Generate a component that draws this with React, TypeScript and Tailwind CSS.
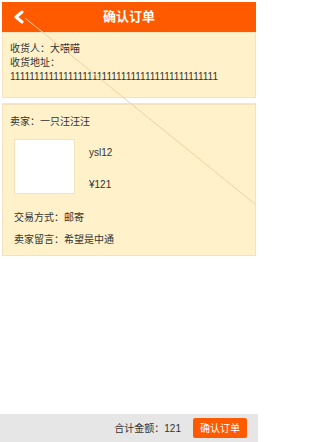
export default function App() {
    return (
        <div className="relative w-[258px] h-[442px] bg-white flex flex-col font-['Liberation_Sans','Noto_Sans_CJK_SC',sans-serif] text-[10px] text-[#333]">
            {/* header */}
            <div className="mt-[2px] mx-[2px] h-[30px] bg-[#ff5a00] flex items-center relative">
                <svg className="absolute left-[11px] top-[8px]" width="12" height="14" viewBox="0 0 12 14">
                    <path d="M9 2 L3 7 L9 12" fill="none" stroke="#fff" strokeWidth="3" strokeLinecap="round" strokeLinejoin="round" />
                </svg>
                <div className="flex-1 text-center text-white text-[13px] font-bold">确认订单</div>
            </div>

            {/* address */}
            <div className="mx-[2px] bg-[#fff1c9] border border-[#f3e2bb] px-[7px] pt-[9px] pb-[13px] leading-[14px]">
                <div>收货人：大喵喵</div>
                <div>收货地址：</div>
                <div>1111111111111111111111111111111111111111111</div>
            </div>

            <div className="mx-[2px] h-[6px] border-b border-[#e6e6e6]" />

            {/* order */}
            <div className="mx-[2px] bg-[#fff1c9] border border-[#f3e2bb] h-[152px] px-[7px] pt-[9px]">
                <div>卖家：一只汪汪汪</div>
                <div className="flex mt-[10px] ml-[4px]">
                    <div className="w-[61px] h-[55px] bg-white border border-[#f3e2bb]" />
                    <div className="flex flex-col justify-between ml-[14px] pt-[6px] pb-[2px]">
                        <div>ysl12</div>
                        <div>¥121</div>
                    </div>
                </div>
                <div className="ml-[4px] mt-[13px] leading-[22px]">
                    <div>交易方式：邮寄</div>
                    <div>卖家留言：希望是中通</div>
                </div>
            </div>

            <div className="flex-1" />

            {/* footer */}
            <div className="h-[28px] bg-[#e6e6e6] flex items-center justify-end pr-[11px]">
                <span className="mr-[12px]">合计金额：121</span>
                <button className="h-[20px] px-[7px] bg-[#ff5a00] text-white text-[10px] rounded-[2px]">确认订单</button>
            </div>

            {/* stray line across the page */}
            <svg className="absolute left-0 top-0 pointer-events-none" width="258" height="442">
                <line x1="25" y1="18" x2="255" y2="204" stroke="#f2cfa6" strokeWidth="1" />
            </svg>
        </div>
    );
}
